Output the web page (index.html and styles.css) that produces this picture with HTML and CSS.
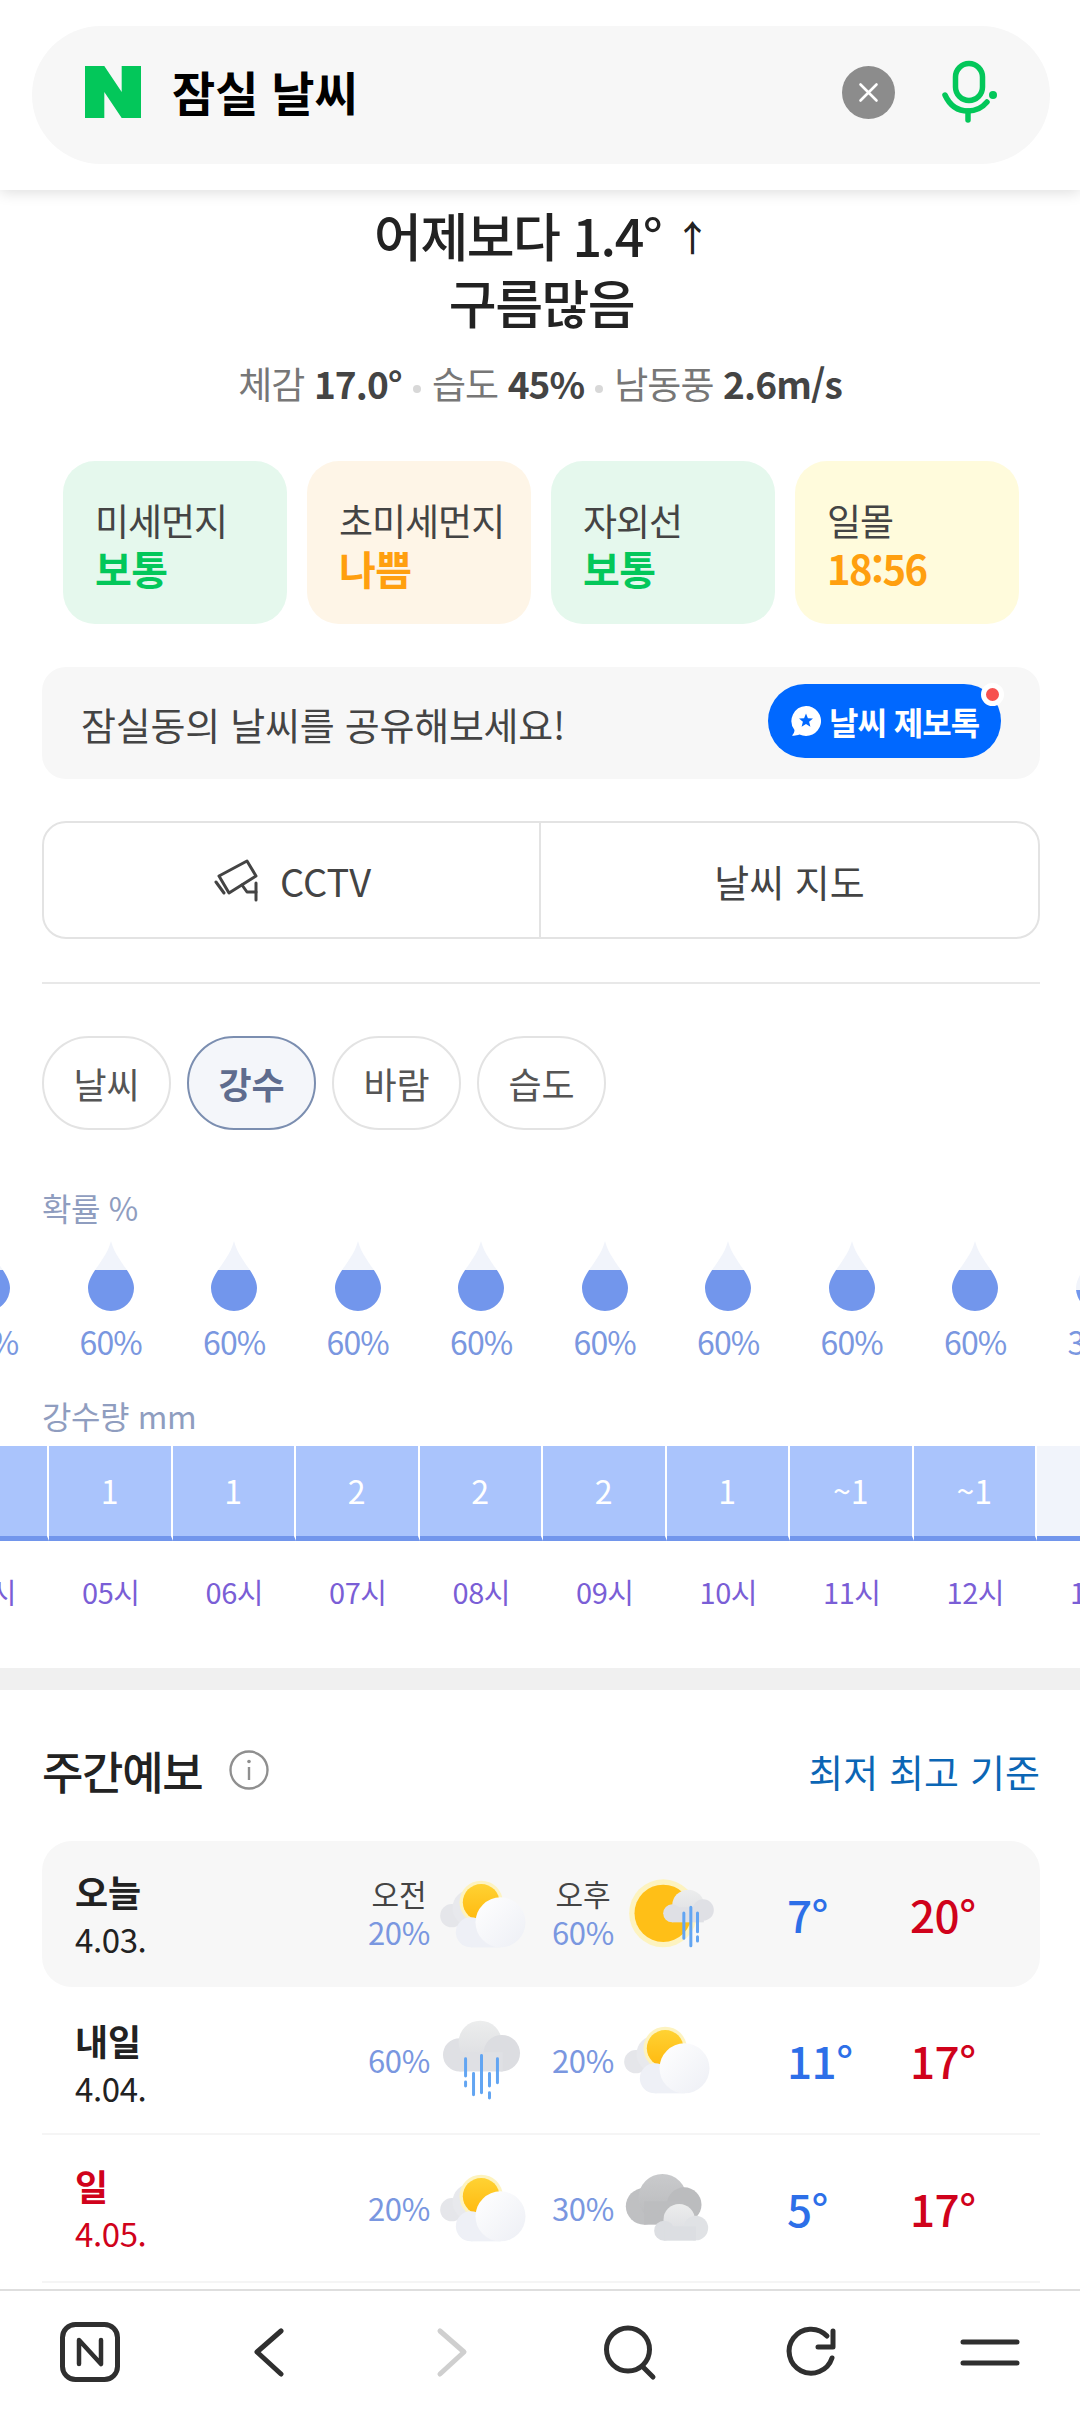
FILE: index.html
```html
<!DOCTYPE html>
<html lang="ko">
<head>
<meta charset="utf-8">
<title>잠실 날씨</title>
<link rel="stylesheet" href="styles.css">
</head>
<body>
<svg class="defs" width="0" height="0" aria-hidden="true">
  <defs>
    <linearGradient id="gSun" x1="0" y1="0" x2="0" y2="1"><stop offset="0" stop-color="#ffd233"/><stop offset="1" stop-color="#ffb90f"/></linearGradient>
    <linearGradient id="gWhite" x1="0" y1="0" x2="1" y2="1"><stop offset="0" stop-color="#ffffff"/><stop offset="1" stop-color="#edeff5"/></linearGradient>
    <linearGradient id="gGrey" x1="0" y1="0" x2="0" y2="1"><stop offset="0" stop-color="#eceded"/><stop offset="1" stop-color="#dcdde1"/></linearGradient>
    <linearGradient id="gDark" x1="0" y1="0" x2="0" y2="1"><stop offset="0" stop-color="#c9cacc"/><stop offset="1" stop-color="#b9babc"/></linearGradient>
    <clipPath id="fill60"><rect x="0" y="29" width="48" height="41"/></clipPath>
    <clipPath id="fill30"><rect x="0" y="49" width="48" height="21"/></clipPath>
    <symbol id="drop60" viewBox="0 0 48 70">
      <path fill="#f1f4fb" d="M24 0C29 20 47 32 47 47A23 23 0 0 1 1 47C1 32 19 20 24 0Z"/>
      <path fill="#7296ec" clip-path="url(#fill60)" d="M24 0C29 20 47 32 47 47A23 23 0 0 1 1 47C1 32 19 20 24 0Z"/>
    </symbol>
    <symbol id="drop30" viewBox="0 0 48 70">
      <path fill="#f1f4fb" d="M24 0C29 20 47 32 47 47A23 23 0 0 1 1 47C1 32 19 20 24 0Z"/>
      <path fill="#7296ec" clip-path="url(#fill30)" d="M24 0C29 20 47 32 47 47A23 23 0 0 1 1 47C1 32 19 20 24 0Z"/>
    </symbol>
    <symbol id="partly" viewBox="300 175 260 210">
      <circle cx="335" cy="285" r="35" fill="#e5e6ea"/>
      <circle cx="392" cy="262" r="55" fill="#e8e9ed"/>
      <circle cx="423" cy="245" r="65" fill="#fdf3c0"/>
      <circle cx="423" cy="245" r="55" fill="url(#gSun)"/>
      <circle cx="392" cy="335" r="45" fill="#eef0f6"/>
      <rect x="392" y="300" width="90" height="80" fill="#eef0f6"/>
      <circle cx="481" cy="305" r="75" fill="url(#gWhite)"/>
    </symbol>
    <symbol id="sunrain" viewBox="860 165 260 210">
      <circle cx="965" cy="268" r="102" fill="#fdf3c0"/>
      <circle cx="965" cy="268" r="86" fill="#ffbf17"/>
      <circle cx="1040" cy="245" r="48" fill="url(#gGrey)"/>
      <circle cx="1085" cy="258" r="32" fill="#dfe0e5"/>
      <circle cx="992" cy="268" r="27" fill="#dfe0e5"/>
      <rect x="992" y="250" width="95" height="45" fill="#dfe0e5"/>
      <g stroke="#62a5f2" stroke-width="9" stroke-linecap="round" fill="none">
        <path d="M1027 267V343M1048 250V365M1068 267V323M1068 338V351"/>
      </g>
    </symbol>
    <symbol id="raincloud" viewBox="300 600 260 250">
      <circle cx="358" cy="708" r="50" fill="#dfe0e4"/>
      <circle cx="420" cy="670" r="65" fill="url(#gGrey)"/>
      <circle cx="485" cy="703" r="55" fill="#dcdde1"/>
      <rect x="358" y="700" width="130" height="58" fill="#dfe0e4"/>
      <g stroke="#62a5f2" stroke-width="9" stroke-linecap="round" fill="none">
        <path d="M376 720V772M376 790V802M400 764V828M424 710V822M448 764V802M448 822V838M472 720V792"/>
      </g>
    </symbol>
    <symbol id="darkcloud" viewBox="850 1055 260 210">
      <circle cx="910" cy="1155" r="55" fill="#bfc0c2"/>
      <circle cx="965" cy="1130" r="72" fill="url(#gDark)"/>
      <circle cx="1030" cy="1150" r="52" fill="#bbbcbe"/>
      <rect x="910" y="1140" width="120" height="70" fill="#bcbdbf"/>
      <circle cx="1015" cy="1195" r="47" fill="url(#gGrey)"/>
      <circle cx="1065" cy="1220" r="37" fill="#e0e2e5"/>
      <circle cx="970" cy="1228" r="30" fill="#dcdee2"/>
      <rect x="970" y="1215" width="95" height="43" fill="#dcdee2"/>
    </symbol>
  </defs>
</svg>

<header class="top">
  <div class="search">
    <svg class="logo" viewBox="0 0 58 54" width="56" height="54"><path fill="#03c75a" d="M0 0H20L38 27V0H58V54H38L20 27V54H0Z"/></svg>
    <span class="query">잠실 날씨</span>
    <svg class="clear" viewBox="0 0 53 53" width="53" height="53"><circle cx="26.5" cy="26.5" r="26.5" fill="#8c8c8c"/><path d="M18.5 18.5L34.5 34.5M34.5 18.5L18.5 34.5" stroke="#fff" stroke-width="2.6" stroke-linecap="round"/></svg>
    <svg class="mic" viewBox="0 0 58 64" width="58" height="64" fill="none" stroke="#03c75a" stroke-width="5.5" stroke-linecap="round"><rect x="15.5" y="3.5" width="27" height="37" rx="13.5"/><path d="M5 35C10 46 18 51 28 51C35 51 42 48 47 42"/><path d="M28 51V60"/><circle cx="53" cy="35" r="4" fill="#03c75a" stroke="none"/></svg>
  </div>
</header>

<main>
  <section class="summary">
    <p class="line">어제보다 1.4° <span class="arrow">↑</span></p>
    <p class="line strong">구름많음</p>
    <p class="stats">체감 <b>17.0°</b><i></i>습도 <b>45%</b><i></i>남동풍 <b>2.6m/s</b></p>
  </section>

  <section class="cards">
    <div class="card green"><span>미세먼지</span><b>보통</b></div>
    <div class="card peach"><span>초미세먼지</span><b>나쁨</b></div>
    <div class="card green"><span>자외선</span><b>보통</b></div>
    <div class="card yellow"><span>일몰</span><b class="time">18:56</b></div>
  </section>

  <section class="share">
    <span>잠실동의 날씨를 공유해보세요!</span>
    <a class="talk">
      <svg viewBox="0 0 32 32" width="32" height="32"><path fill="#fff" d="M16 1A15 15 0 1 1 9.5 29.5C7 30.5 4 31 2 30.5C3.5 29 4.5 27 4.5 25A15 15 0 0 1 16 1Z"/><path fill="#0068ff" d="M16 8.5L17.9 13.3L23 13.6L19.1 16.8L20.4 21.8L16 19L11.6 21.8L12.9 16.8L9 13.6L14.1 13.3Z"/></svg>
      날씨 제보톡
      <em></em>
    </a>
  </section>

  <section class="links">
    <a><svg viewBox="0 0 44 44" width="44" height="44" fill="none" stroke="#444" stroke-width="3" stroke-linejoin="round" stroke-linecap="round"><path d="M5 18L33 3L42 18L15 35Z"/><path d="M2 24L10 35"/><path d="M28 27L33 34H42"/><path d="M42 25V42"/></svg>CCTV</a>
    <a>날씨 지도</a>
  </section>

  <hr class="rule">

  <nav class="tabs">
    <span>날씨</span><span class="on">강수</span><span>바람</span><span>습도</span>
  </nav>

  <h3 class="lab lab1">확률 %</h3>
  <div class="strip drops">
    <div><svg width="48" height="70"><use href="#drop60"/></svg><span>60%</span></div>
    <div><svg width="48" height="70"><use href="#drop60"/></svg><span>60%</span></div>
    <div><svg width="48" height="70"><use href="#drop60"/></svg><span>60%</span></div>
    <div><svg width="48" height="70"><use href="#drop60"/></svg><span>60%</span></div>
    <div><svg width="48" height="70"><use href="#drop60"/></svg><span>60%</span></div>
    <div><svg width="48" height="70"><use href="#drop60"/></svg><span>60%</span></div>
    <div><svg width="48" height="70"><use href="#drop60"/></svg><span>60%</span></div>
    <div><svg width="48" height="70"><use href="#drop60"/></svg><span>60%</span></div>
    <div><svg width="48" height="70"><use href="#drop60"/></svg><span>60%</span></div>
    <div><svg width="48" height="70"><use href="#drop30"/></svg><span>30%</span></div>
  </div>

  <h3 class="lab lab2">강수량 mm</h3>
  <div class="strip bars">
    <div>1</div><div>1</div><div>1</div><div>2</div><div>2</div><div>2</div><div>1</div><div>~1</div><div>~1</div><div class="none"></div>
  </div>
  <div class="strip hours">
    <span>04시</span><span>05시</span><span>06시</span><span>07시</span><span>08시</span><span>09시</span><span>10시</span><span>11시</span><span>12시</span><span>13시</span>
  </div>

  <div class="band"></div>

  <section class="week">
    <div class="week-head">
      <h2>주간예보</h2>
      <svg viewBox="0 0 40 40" width="40" height="40" fill="none" stroke="#8f8f8f"><circle cx="20" cy="20" r="18.5" stroke-width="2.4"/><path d="M20 17V30" stroke-width="2.4"/><circle cx="20" cy="11.5" r="1.8" fill="#8f8f8f" stroke="none"/></svg>
      <a>최저 최고 기준</a>
    </div>

    <div class="day today">
      <div class="date"><b>오늘</b><span>4.03.</span></div>
      <div class="pop"><span class="ampm">오전</span><span class="pct">20%</span></div>
      <svg class="ico" width="87" height="70"><use href="#partly"/></svg>
      <div class="pop"><span class="ampm">오후</span><span class="pct">60%</span></div>
      <svg class="ico" width="87" height="70"><use href="#sunrain"/></svg>
      <b class="min">7°</b><b class="max">20°</b>
    </div>

    <div class="day next">
      <div class="date"><b>내일</b><span>4.04.</span></div>
      <div class="pop"><span class="pct">60%</span></div>
      <svg class="ico" width="87" height="83"><use href="#raincloud"/></svg>
      <div class="pop"><span class="pct">20%</span></div>
      <svg class="ico shift" width="87" height="70"><use href="#partly"/></svg>
      <b class="min">11°</b><b class="max">17°</b>
    </div>

    <div class="day sun">
      <div class="date"><b>일</b><span>4.05.</span></div>
      <div class="pop"><span class="pct">20%</span></div>
      <svg class="ico" width="87" height="70"><use href="#partly"/></svg>
      <div class="pop"><span class="pct">30%</span></div>
      <svg class="ico shift" width="87" height="70"><use href="#darkcloud"/></svg>
      <b class="min">5°</b><b class="max">17°</b>
    </div>
  </section>
</main>

<footer class="bar">
  <svg viewBox="0 0 60 60" width="60" height="60" fill="none" stroke="#2f2f2f" stroke-linecap="round" stroke-linejoin="round"><rect x="2.5" y="2.5" width="55" height="55" rx="13" stroke-width="5"/><path d="M19 42V18L41 42V18" stroke-width="4.5"/></svg>
  <svg viewBox="0 0 60 60" width="60" height="60" fill="none" stroke="#2f2f2f" stroke-width="5" stroke-linecap="round" stroke-linejoin="round"><path d="M41 9L17 30L41 52"/></svg>
  <svg viewBox="0 0 60 60" width="60" height="60" fill="none" stroke="#cfcfcf" stroke-width="5" stroke-linecap="round" stroke-linejoin="round"><path d="M20 9L44 30L20 52"/></svg>
  <svg viewBox="0 0 60 60" width="60" height="60" fill="none" stroke="#2f2f2f" stroke-width="5" stroke-linecap="round"><circle cx="28" cy="27.5" r="21.5"/><path d="M43 45L53 55"/></svg>
  <svg viewBox="0 0 60 60" width="60" height="60" fill="none" stroke="#2f2f2f" stroke-width="5" stroke-linecap="round" stroke-linejoin="round"><path d="M52 36A22 22 0 1 1 47 14"/><path d="M53 9V25H38"/></svg>
  <svg viewBox="0 0 60 60" width="60" height="60" fill="none" stroke="#2f2f2f" stroke-width="5" stroke-linecap="round"><path d="M3 20H57M3 41H57"/></svg>
</footer>
</body>
</html>
```
FILE: styles.css
```css
* { box-sizing: border-box; }
html, body { margin: 0; padding: 0; }
body {
  width: 1080px;
  height: 2420px;
  overflow: hidden;
  display: flex;
  flex-direction: column;
  background: #fff;
  color: #222;
  font-family: "Noto Sans CJK KR", "Noto Sans", sans-serif;
}
.defs { position: absolute; }
p, h2, h3 { margin: 0; font-weight: 400; }

.top {
  height: 190px;
  flex: none;
  padding: 26px 30px 0 32px;
  background: #fff;
  box-shadow: 0 2px 14px rgba(0,0,0,.14);
  position: relative;
  z-index: 2;
}
.search {
  height: 138px;
  border-radius: 69px;
  background: #f7f7f7;
  display: flex;
  align-items: center;
  padding: 0 52px 6px 53px;
}
.logo { margin-right: 31px; }
.query { font-size: 47px; line-height: 60px; font-weight: 700; color: #000; flex: 1; letter-spacing: -.1px; margin-bottom: 2px; }
.clear { margin-right: 45px; }

main { flex: 1; min-height: 0; overflow: hidden; }

.summary { text-align: center; padding-top: 12px; }
.line { font-size: 52px; line-height: 65px; color: #222; letter-spacing: -1.5px; font-weight: 500; padding-left: 3px; }
.arrow { font-size: 36px; font-weight: 500; vertical-align: 5px; }
.stats { margin-top: 23px; font-size: 37px; line-height: 52px; color: #777; letter-spacing: -.9px; }
.stats b { color: #444; font-weight: 700; }
.stats i { display: inline-block; width: 8px; height: 8px; margin: 0 11px; border-radius: 50%; background: #d8d8d8; vertical-align: middle; }

.cards { display: flex; gap: 20px; padding: 52px 0 0 63px; }
.card { width: 224px; height: 163px; border-radius: 32px; padding: 36px 32px 0; display: flex; flex-direction: column; }
.card span { font-size: 37px; line-height: 46px; color: #444; letter-spacing: -1px; white-space: nowrap; }
.card b { font-size: 40px; line-height: 50px; font-weight: 700; letter-spacing: -.5px; }
.card b.time { letter-spacing: -1.6px; }
.green { background: #e5f8ed; }
.green b { color: #03c75a; }
.peach { background: #fef5e7; }
.peach b, .yellow b { color: #ff9f0f; }
.yellow { background: #fffbdc; }

.share {
  margin: 43px 40px 0 42px;
  height: 112px;
  border-radius: 24px;
  background: #f7f7f7;
  display: flex;
  align-items: center;
  justify-content: space-between;
  padding: 0 39px;
  font-size: 38px;
  color: #444;
  letter-spacing: -.25px;
}
.talk {
  position: relative;
  width: 233px;
  height: 74px;
  margin: 0 0 4px 0;
  border-radius: 37px;
  background: #0068ff;
  display: flex;
  align-items: center;
  gap: 7px;
  padding-left: 22px;
  color: #fff;
  font-size: 32px;
  font-weight: 700;
  letter-spacing: -1px;
  white-space: nowrap;
}
.talk em { position: absolute; right: -2.5px; top: -1.5px; width: 23px; height: 23px; border-radius: 50%; background: #f7514f; border: 5px solid #fff; }

.links {
  margin: 42px 40px 0 42px;
  height: 118px;
  border: 2px solid #e3e3e3;
  border-radius: 24px;
  display: flex;
}
.links a {
  flex: 0 0 50%;
  display: flex;
  align-items: center;
  justify-content: center;
  gap: 22px;
  font-size: 38px;
  color: #444;
}
.links a:first-child { border-right: 2px solid #e3e3e3; padding-left: 2px; }

.rule { margin: 43px 40px 0 42px; border: 0; height: 2px; background: #e8e8e8; }

.tabs { display: flex; gap: 16px; padding: 52px 0 0 42px; }
.tabs span {
  width: 129px;
  height: 94px;
  border: 2px solid #e3e3e3;
  border-radius: 47px;
  display: flex;
  align-items: center;
  justify-content: center;
  font-size: 36px;
  color: #555;
}
.tabs .on { background: #f4f6fa; border-color: #7b8eb0; color: #5f6c8e; font-weight: 700; }

.lab { padding-left: 42px; font-size: 32px; line-height: 44px; color: #8f9dbf; letter-spacing: -.4px; }
.lab1 { margin-top: 55px; }
.lab2 { margin-top: 30px; }

.strip { display: flex; margin-left: -74.5px; width: 1400px; }
.drops { margin-top: 12px; }
.drops div { width: 123.5px; flex: none; display: flex; flex-direction: column; align-items: center; }
.drops span { margin-top: 8px; font-size: 32px; line-height: 44px; color: #7a97e0; letter-spacing: -.8px; }

.bars { margin-top: 9px; }
.bars div {
  width: 123.5px;
  height: 95px;
  flex: none;
  border-right: 2px solid #fff;
  border-bottom: 5px solid #7296ec;
  background: #aac4fc;
  color: #fff;
  font-size: 32px;
  display: flex;
  align-items: center;
  justify-content: center;
  padding-bottom: 3px;
}
.bars .none { background: #f1f4fb; border-right: 0; }

.hours { margin-top: 29px; }
.hours span { width: 123.5px; flex: none; text-align: center; font-size: 29px; line-height: 42px; color: #7a5ed6; letter-spacing: -.5px; }

.band { height: 22px; margin-top: 56px; background: #f0f0f0; }

.week { padding: 0 40px 0 42px; }
.week-head { display: flex; align-items: center; height: 64px; margin-top: 48px; }
.week-head h2 { font-size: 45px; font-weight: 500; color: #222; letter-spacing: -1.3px; }
.week-head svg { margin-left: 27px; }
.week-head a { margin-left: auto; font-size: 38px; color: #0b66b5; letter-spacing: .1px; }

.day {
  display: grid;
  grid-template-columns: 316px 82px 98px 90px 159px 123px 1fr;
  align-items: center;
  height: 148px;
  border-bottom: 2px solid #f5f5f5;
}
.today { height: 146px; margin-top: 39px; border-radius: 30px; background: #f7f7f7; border-bottom: 0; }
.date { display: flex; flex-direction: column; padding-left: 33px; }
.next .date { padding-top: 5px; }
.date b { font-size: 36px; line-height: 50px; font-weight: 700; color: #222; }
.date span { font-size: 33px; line-height: 46px; color: #222; letter-spacing: -.4px; }
.sun .date b, .sun .date span { color: #d0021b; }
.pop { display: flex; flex-direction: column; align-items: center; }
.ampm { font-size: 30px; line-height: 36px; color: #444; }
.pct { font-size: 31px; line-height: 42px; color: #7a97e0; letter-spacing: -.3px; }
.ico { display: block; }
.shift { margin-left: -4px; }
.min, .max { font-size: 44px; font-weight: 500; letter-spacing: -.5px; }
.min { color: #2d6fe8; }
.max { color: #d0021b; }

.bar {
  flex: none;
  height: 131px;
  border-top: 2px solid #dedede;
  display: grid;
  grid-template-columns: repeat(6, 180px);
  justify-items: center;
  align-items: center;
  background: #fff;
  padding-bottom: 8px;
}
```
